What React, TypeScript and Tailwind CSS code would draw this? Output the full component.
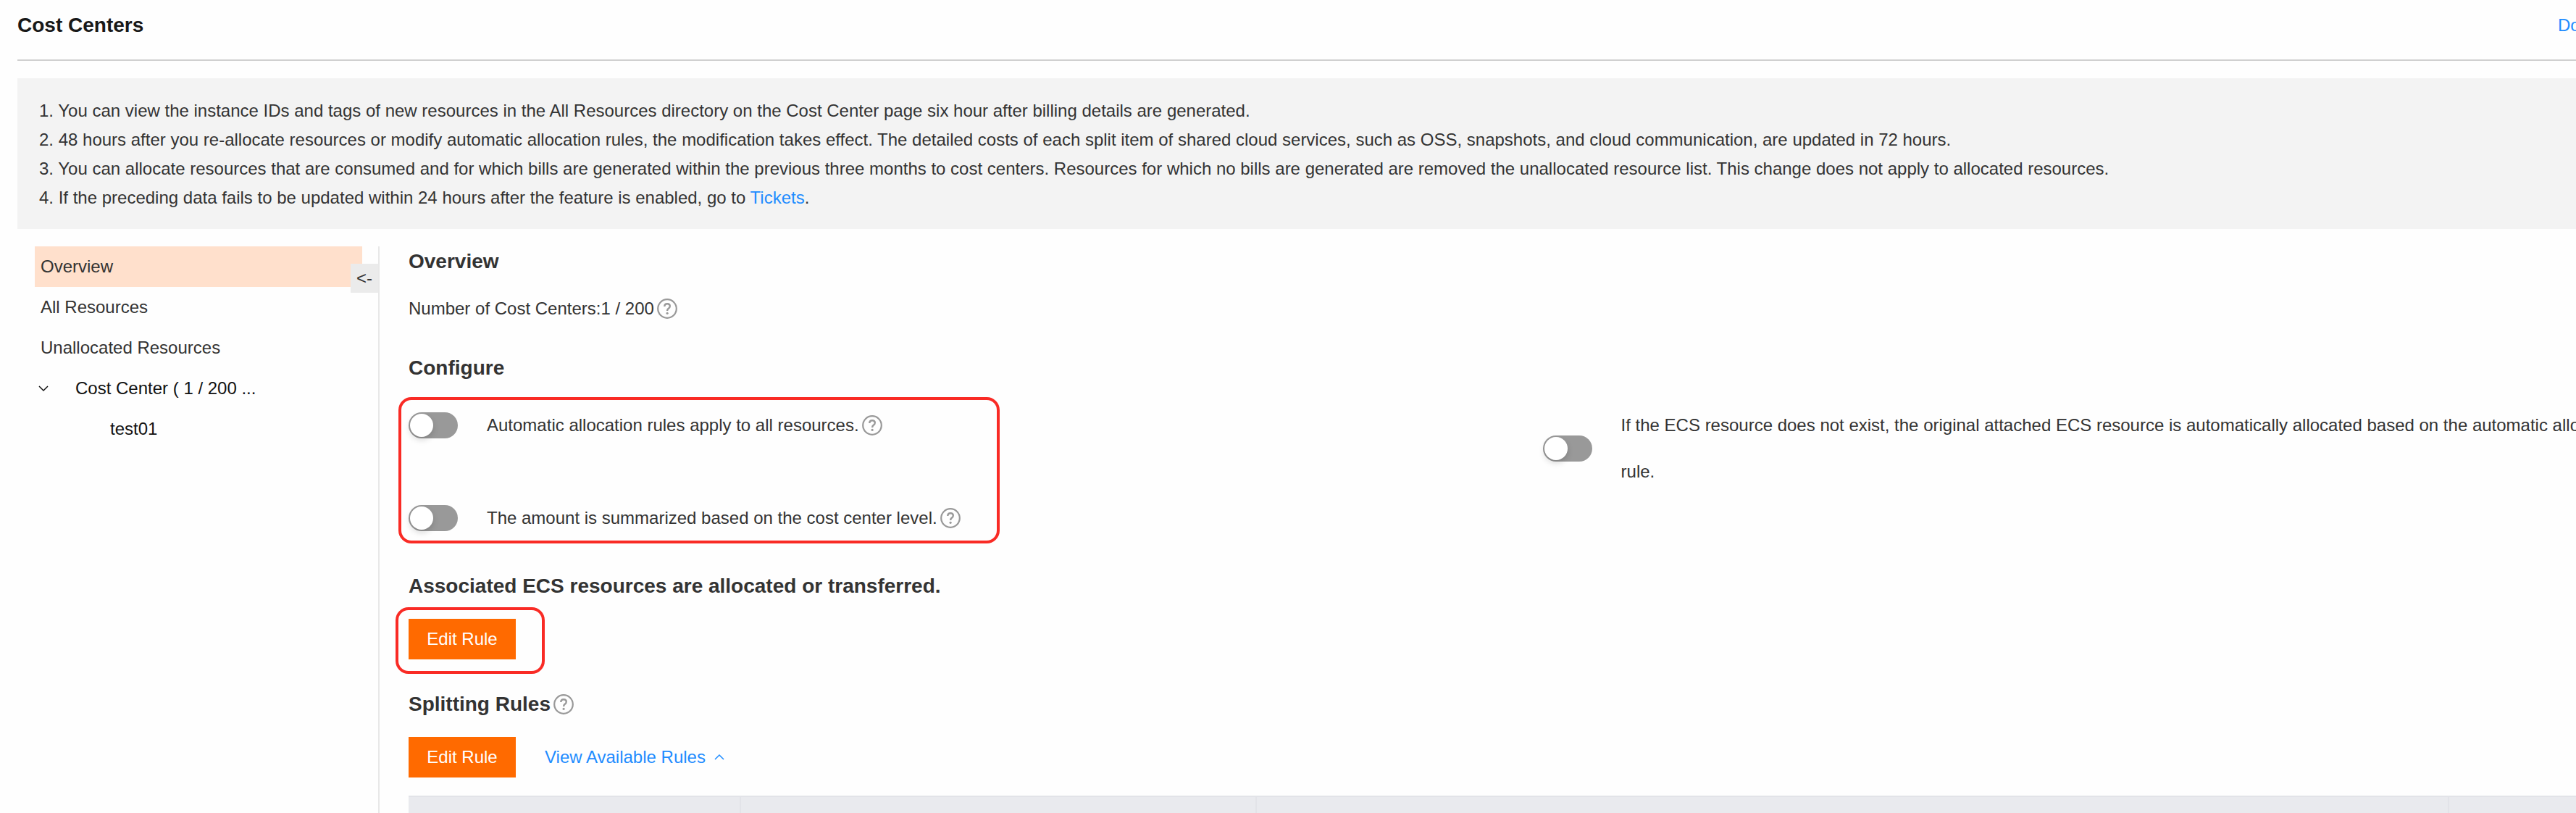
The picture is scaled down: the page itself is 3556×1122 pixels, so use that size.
import React, { useState } from 'react';

const notices = [
  'You can view the instance IDs and tags of new resources in the All Resources directory on the Cost Center page six hour after billing details are generated.',
  '48 hours after you re-allocate resources or modify automatic allocation rules, the modification takes effect. The detailed costs of each split item of shared cloud services, such as OSS, snapshots, and cloud communication, are updated in 72 hours.',
  'You can allocate resources that are consumed and for which bills are generated within the previous three months to cost centers. Resources for which no bills are generated are removed the unallocated resource list. This change does not apply to allocated resources.',
];

const navItems = ['Overview', 'All Resources', 'Unallocated Resources'];

const HelpIcon = () => (
  <svg viewBox="0 0 28 28" className="size-7 shrink-0" fill="none" stroke="#999" aria-hidden="true">
    <circle cx="14" cy="14" r="12.8" strokeWidth="2.2" />
    <path d="M10.3 10.9c0-2.3 1.5-3.7 3.8-3.7 2.2 0 3.7 1.3 3.7 3.3 0 1.5-.7 2.3-2 3.2-1.3.9-1.7 1.6-1.7 3.3" strokeWidth="2.4" />
    <circle cx="14.1" cy="20.3" r="1.6" fill="#999" stroke="none" />
  </svg>
);

const Chevron: React.FC<{ up?: boolean }> = ({ up }) => (
  <svg viewBox="0 0 14 10" className="h-[10px] w-[14px] shrink-0" fill="none" stroke="currentColor" strokeWidth="1.5" aria-hidden="true">
    <path d={up ? 'M1 8l6-6 6 6' : 'M1 2l6 6 6-6'} />
  </svg>
);

interface ToggleProps {
  id: string;
}

const Toggle: React.FC<ToggleProps> = ({ id }) => {
  const [on, setOn] = useState(false);
  return (
    <input
      id={id}
      type="checkbox"
      checked={on}
      onChange={() => setOn(!on)}
      className="h-9 w-[68px] shrink-0 cursor-pointer appearance-none rounded-full bg-[#999] p-[2px] before:block before:size-8 before:rounded-full before:bg-white before:shadow-[0_4px_8px_rgba(0,0,0,0.15)] checked:bg-[#ff6a00] checked:before:ml-8"
    />
  );
};

const SectionTitle: React.FC<{ children: React.ReactNode }> = ({ children }) => (
  <h2 className="text-[28px] leading-[42px] font-bold">{children}</h2>
);

const EditButton = () => (
  <button type="button" className="h-14 w-[148px] cursor-pointer bg-[#ff6a00] text-white">
    Edit Rule
  </button>
);

export default function App() {
  return (
    <div className="overflow-hidden bg-[#fefefe] pl-6 font-['Helvetica_Neue','Liberation_Sans',Arial,sans-serif] text-[24px] leading-10 text-[#333]">
      <header className="flex h-[84px] items-start justify-between border-b-2 border-[#d0d0d0] pt-[15px]">
        <h1 className="text-[28px] leading-10 font-bold text-[#181818]">Cost Centers</h1>
        <a href="#" className="w-[25px] overflow-hidden whitespace-nowrap text-[#1e8cff]">Do</a>
      </header>

      {/* Notice */}
      <ol className="mt-6 bg-[#f3f3f3] px-[30px] pt-[25px] pb-[23px]">
        {notices.map((text, i) => (
          <li key={text}>{i + 1}. {text}</li>
        ))}
        <li>
          4. If the preceding data fails to be updated within 24 hours after the feature is enabled, go to{' '}
          <a href="#" className="text-[#1e8cff]">Tickets</a>.
        </li>
      </ol>

      <div className="mt-6 flex">
        {/* Sidebar */}
        <aside className="relative ml-6 w-[476px] shrink-0 border-r-2 border-[#e8e8e8]">
          <nav className="mr-[22px] leading-[56px]">
            {navItems.map((item, i) => (
              <a key={item} href="#" className={i === 0 ? 'block bg-[#ffe0cc] px-2' : 'block px-2'}>
                {item}
              </a>
            ))}
            <div className="flex items-center pl-[5px] text-[#111]">
              <button type="button" aria-label="Collapse cost centers" className="mr-[37px] flex h-14 cursor-pointer items-center">
                <Chevron />
              </button>
              <a href="#">Cost Center ( 1 / 200 ...</a>
            </div>
            <a href="#" className="block pl-[104px] text-[#111]">test01</a>
          </nav>
          <button type="button" className="absolute top-6 right-0 h-10 w-[38px] cursor-pointer bg-[#ebebeb] text-center">
            &lt;-
          </button>
        </aside>

        {/* Content */}
        <main className="min-w-0 flex-1 pl-10">
          <SectionTitle>Overview</SectionTitle>
          <div className="mt-6 flex items-center gap-1">
            <span>Number of Cost Centers:1 / 200</span>
            <HelpIcon />
          </div>

          <div className="mt-[41px]">
            <SectionTitle>Configure</SectionTitle>
          </div>
          <div className="relative mt-[26px] grid grid-cols-[45fr_41fr] leading-[64px]">
            <div className="flex min-w-0 items-start">
              <div className="flex h-16 items-center">
                <Toggle id="auto-allocation" />
                <label htmlFor="auto-allocation" className="ml-10">Automatic allocation rules apply to all resources.</label>
                <span className="ml-1"><HelpIcon /></span>
              </div>
            </div>
            <div className="flex min-w-0 items-center whitespace-nowrap">
              <Toggle id="ecs-fallback" />
              <label htmlFor="ecs-fallback" className="ml-10">
                If the ECS resource does not exist, the original attached ECS resource is automatically allocated based on the automatic allocation
                <br />
                rule.
              </label>
            </div>
            <div className="flex min-w-0 items-center">
              <Toggle id="amount-summary" />
              <label htmlFor="amount-summary" className="ml-10">The amount is summarized based on the cost center level.</label>
              <span className="ml-1"><HelpIcon /></span>
            </div>
            <div className="pointer-events-none absolute -top-[7px] -bottom-[3px] -left-[14px] w-[830px] rounded-[18px] border-4 border-[#f92b25]" />
          </div>

          <div className="mt-[41px]">
            <SectionTitle>Associated ECS resources are allocated or transferred.</SectionTitle>
          </div>
          <div className="relative mt-6 h-14">
            <EditButton />
            <div className="pointer-events-none absolute -top-4 -left-[18px] h-[92px] w-[206px] rounded-[18px] border-4 border-[#f92b25]" />
          </div>

          <div className="mt-[41px] flex items-center gap-1">
            <SectionTitle>Splitting Rules</SectionTitle>
            <HelpIcon />
          </div>
          <div className="mt-6 flex items-center gap-10">
            <EditButton />
            <button type="button" className="flex cursor-pointer items-center gap-3 text-[#1e8cff]">
              View Available Rules
              <Chevron up />
            </button>
          </div>

          <table className="mt-[25px] w-full table-fixed border-collapse bg-[#e9eaee]" aria-label="Available rules">
            <thead>
              <tr className="h-6 border-t-2 border-[#e2e3e8]">
                <th className="w-[458px] border-r-2 border-[#e2e3e8]" />
                <th className="w-[712px] border-r-2 border-[#e2e3e8]" />
                <th className="w-[55%] border-r-2 border-[#e2e3e8]" />
                <th />
              </tr>
            </thead>
          </table>
        </main>
      </div>
    </div>
  );
}
